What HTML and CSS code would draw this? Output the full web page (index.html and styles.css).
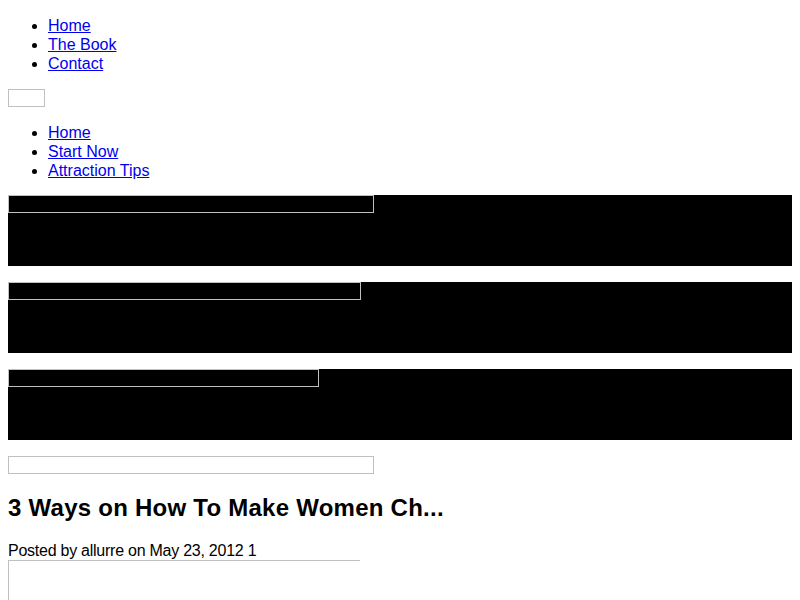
FILE: index.html
```html
<!DOCTYPE html>
<html lang="en">
<head>
    <meta charset="UTF-8">
    <meta name="viewport" content="width=device-width, initial-scale=1.0">
    <title>Attraction Tips</title>
    <link rel="stylesheet" href="styles.css">
</head>
<body>
    <ul class="topNav">
        <li><a href="#">Home</a></li>
        <li><a href="#">The Book</a></li>
        <li><a href="#">Contact</a></li>
    </ul>

    <div class="logo"><span class="pic"></span></div>

    <ul class="mainNav">
        <li><a href="#">Home</a></li>
        <li><a href="#">Start Now</a></li>
        <li><a href="#">Attraction Tips</a></li>
    </ul>

    <div class="slides">
        <div class="slide"><span class="pic wide"></span></div>
        <div class="slide"><span class="pic mid"></span></div>
        <div class="slide"><span class="pic small"></span></div>
    </div>

    <div class="banner"><span class="pic wide"></span></div>

    <div class="post">
        <h2>3 Ways on How To Make Women Ch...</h2>
        <p class="meta">Posted by allurre on May 23, 2012 1</p>
        <span class="pic thumb"></span>
    </div>
</body>
</html>
```

FILE: styles.css
```css
body {
    margin: 0 8px 8px;
    font-family: "Liberation Sans", Arial, sans-serif;
    font-size: 16px;
    color: #000;
}

a {
    color: #0000ee;
}

ul {
    margin: 16px 0;
    padding-left: 40px;
    line-height: 19px;
}

.mainNav {
    margin-bottom: 15px;
}

.pic {
    display: block;
    box-sizing: border-box;
    border: 1px solid #c0c0c0;
    height: 18px;
}

.logo .pic {
    width: 37px;
}

.slide {
    background-color: #000;
    height: 71px;
    margin-bottom: 16px;
}

.wide {
    width: 366px;
}

.mid {
    width: 353px;
}

.small {
    width: 311px;
}

.post h2 {
    font-size: 24px;
    line-height: 28px;
    letter-spacing: 0.25px;
    margin: 20px 0;
}

.post .meta {
    margin: 20px 0 0;
    line-height: 18px;
    letter-spacing: -0.25px;
}

.thumb {
    width: 352px;
    height: 200px;
    border-right: none;
    border-bottom: none;
}
```
